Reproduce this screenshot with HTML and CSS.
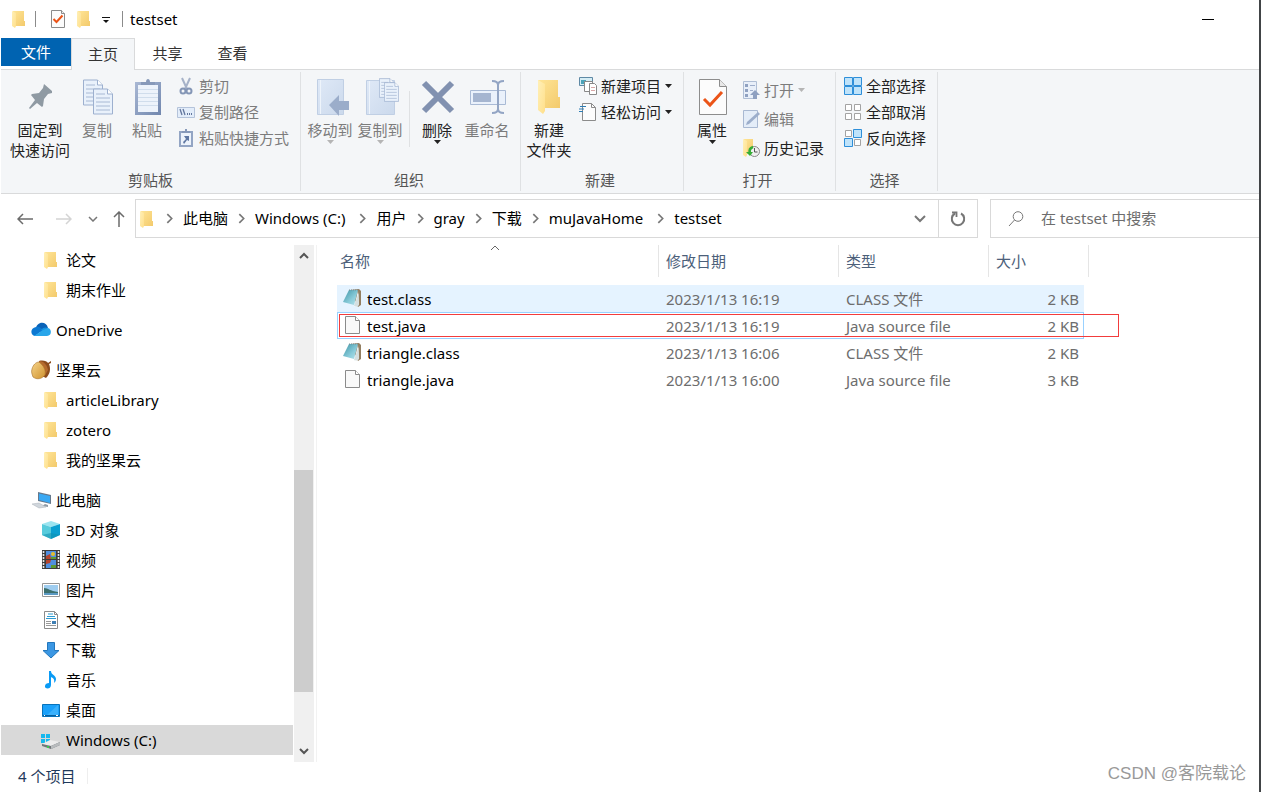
FILE: index.html
```html
<!DOCTYPE html>
<html lang="zh-CN">
<head>
<meta charset="utf-8">
<title>testset</title>
<link rel="stylesheet" href="styles.css">
</head>
<body>
<svg class="defs" aria-hidden="true">
  <defs>
    <linearGradient id="gf" x1="0" y1="0" x2="1" y2="1"><stop offset="0" stop-color="#ffe596"/><stop offset="1" stop-color="#f3ca6c"/></linearGradient>
    <linearGradient id="gp" x1="0" y1="0" x2="1" y2="1"><stop offset="0" stop-color="#fff0b8"/><stop offset="1" stop-color="#ffdf8a"/></linearGradient>
    <linearGradient id="gb" x1="0" y1="0" x2="1" y2="1"><stop offset="0" stop-color="#a9b8d4"/><stop offset="1" stop-color="#7187ae"/></linearGradient>
    <linearGradient id="gl" x1="0" y1="0" x2="1" y2="1"><stop offset="0" stop-color="#dfe9f7"/><stop offset="1" stop-color="#cbd9ec"/></linearGradient>
    <linearGradient id="gt" x1="0" y1="0" x2="1" y2="1"><stop offset="0" stop-color="#3d93a5"/><stop offset=".6" stop-color="#8accda"/><stop offset="1" stop-color="#b9e3ea"/></linearGradient>
    <linearGradient id="ga" x1="0" y1="0" x2="1" y2="1"><stop offset="0" stop-color="#f6d48a"/><stop offset="1" stop-color="#cf922f"/></linearGradient>
    <symbol id="folder" viewBox="0 0 20 20"><path d="M4 2h11v10h1v5H5z" fill="url(#gf)"/><path d="M3 2l4 2v13l-1 2-3-2z" fill="url(#gp)"/></symbol>
    <symbol id="chev" viewBox="0 0 10 10"><path d="M3 1l4 4-4 4" fill="none" stroke="#777" stroke-width="1.5"/></symbol>
    <symbol id="caret" viewBox="0 0 7 4"><path d="M0 0h7L3.500 4z" fill="currentColor"/></symbol>
    <symbol id="page" viewBox="0 0 20 20"><path d="M3.500.500h10l4 4v13h-14z" fill="#f9f9f9" stroke="#8b8b8b"/><path d="M13.500.500v4h4" fill="#fff" stroke="#8b8b8b"/></symbol>
    <symbol id="note" viewBox="0 0 20 20"><path d="M8 1l9-1 2 2v14l-3 2z" fill="#937f62"/><path d="M16 2l1 14-5 2z" fill="#f5fafb"/><path d="M16.500 4l.5 12-2 1.500-3-.5z" fill="#d5dfe0"/><path d="M7 1h9l-4 15-11-3z" fill="url(#gt)"/><path d="M7 1h9" stroke="#7b8d90" stroke-dasharray="1 1"/></symbol>
    <symbol id="propdoc" viewBox="0 0 28 36"><path d="M.5.500h20l7 7v28H.5z" fill="#fcfcfc" stroke="#8d8d8d"/><path d="M20.500.500v7h7" fill="#e8e8e8" stroke="#8d8d8d"/><path d="M5 20l6 6 12-13" fill="none" stroke="#eb5418" stroke-width="3"/></symbol>
    <symbol id="copydoc" viewBox="0 0 20 26"><path d="M.5.500h14l5 5v20H.5z" fill="#e9f1fb" stroke="#9db0cf"/><path d="M14.500.500v5h5" fill="#fff" stroke="#9db0cf"/><path d="M3 5.500h9M3 9.500h14M3 13.500h14M3 17.500h14M3 21.500h14" stroke="#a8b9d4"/></symbol>
  </defs>
</svg>
<div class="window">
  <header class="titlebar">
    <svg class="i20"><use href="#folder"/></svg>
    <span class="tsep"></span>
    <button class="qbtn" aria-label="属性"><svg width="16" height="18" viewBox="0 0 16 18"><path d="M1.500.500h10l3 3v14h-13z" fill="#fcfcfc" stroke="#8b8b8b"/><path d="M11.500.500v3h3" fill="#eee" stroke="#8b8b8b"/><path d="M3.500 9l3 3 6-6.500" fill="none" stroke="#eb5418" stroke-width="2"/></svg></button>
    <button class="qbtn" aria-label="新建文件夹"><svg class="i20"><use href="#folder"/></svg></button>
    <button class="qbtn drop" aria-label="自定义"><svg width="8" height="7" viewBox="0 0 8 7"><path d="M0 .500h8" stroke="#111"/><path d="M1 3h6L4 6z" fill="#111"/></svg></button>
    <span class="tsep"></span>
    <h1 class="title">testset</h1>
    <button class="minimize" aria-label="最小化"></button>
  </header>
  <nav class="tabs">
    <button class="tab file">文件</button><button class="tab active">主页</button><button class="tab">共享</button><button class="tab">查看</button>
  </nav>
  <section class="ribbon">
    <div class="group clip">
      <div class="tools">
        <button class="big wide"><span class="pic"><svg width="28" height="28" viewBox="0 0 28 28"><path d="M17 1l8 7v2l-4 1-4 5-1 7-1 1-5-4-7 6-1-1 6-8-4-5 1-1 7-1 4-5z" fill="#8f9aa3"/></svg></span>固定到<br>快速访问</button>
        <button class="big off"><span class="pic"><svg width="32" height="38" viewBox="0 0 32 38"><use href="#copydoc" x="1" y="1" width="20" height="27"/><use href="#copydoc" x="11" y="10" width="20" height="27"/></svg></span>复制</button>
        <button class="big off"><span class="pic"><svg width="28" height="38" viewBox="0 0 28 38"><path d="M1 4h26v33H1z" fill="url(#gb)"/><path d="M4 7h20v27H4z" fill="#edf3fb"/><path d="M4 11.500h20M4 15.500h20M4 19.500h20M4 23.500h20M4 27.500h20" stroke="#d0ddec"/><path d="M7 7V4h5c0-4 4-4 4 0h5v3z" fill="#8799b9"/></svg></span>粘贴</button>
        <div class="list">
          <button class="small off"><svg viewBox="0 0 18 18"><path d="M5 1l5 11M13 1L8 12" stroke="#a6b2c8" stroke-width="2"/><circle cx="6" cy="14" r="2.500" fill="none" stroke="#8496b6" stroke-width="2"/><circle cx="12" cy="14" r="2.500" fill="none" stroke="#8496b6" stroke-width="2"/></svg>剪切</button>
          <button class="small off"><svg viewBox="0 0 18 18"><path d="M.5 4.500h17v10H.5z" fill="#e3edfa" stroke="#b4c3da"/><path d="M3 6l2 6M6 6l2 6" stroke="#64789e" stroke-width="1.300"/><path d="M10 11h1M12 11h1M14 11h1" stroke="#64789e" stroke-width="2"/></svg>复制路径</button>
          <button class="small off"><svg viewBox="0 0 18 18"><path d="M2 2h14v16H2z" fill="#93a5c4"/><path d="M4 4h10v12H4z" fill="#edf3fb"/><path d="M5 4V2h3V0h2v2h3v2z" fill="#8799b9"/><path d="M7 7h5v5l-2-1-3 4-1-2 3-3z" fill="#5f77a2"/></svg>粘贴快捷方式</button>
        </div>
      </div>
      <div class="label">剪贴板</div>
    </div>
    <div class="group organize">
      <div class="tools">
        <button class="big off"><span class="pic far"><svg width="34" height="38" viewBox="0 0 34 38"><path d="M2.500 1.500h26v35h-26z" fill="url(#gl)" stroke="#c0cfe4"/><path d="M5.500 2v34" stroke="#eef4fb"/><path d="M14 27l10-10v6h10v9H24v6z" fill="#9badca"/></svg></span>移动到<svg class="caret"><use href="#caret"/></svg></button>
        <button class="big off"><span class="pic far"><svg width="34" height="38" viewBox="0 0 34 38"><path d="M1.500 2.500h28v34h-28z" fill="url(#gl)" stroke="#c0cfe4"/><path d="M4.500 3v33" stroke="#eef4fb"/><use href="#copydoc" x="14" y="0" width="15" height="20"/><use href="#copydoc" x="19" y="4" width="15" height="20"/></svg></span>复制到<svg class="caret"><use href="#caret"/></svg></button>
        <span class="rsep"></span>
        <button class="big"><span class="pic"><svg width="34" height="34" viewBox="0 0 34 34"><path d="M3 3l28 28M31 3L3 31" stroke="#8191b0" stroke-width="6"/></svg></span>删除<svg class="caret"><use href="#caret"/></svg></button>
        <button class="big off"><span class="pic"><svg width="36" height="34" viewBox="0 0 36 34"><path d="M.5 10.500h35v14H.5z" fill="#eaf1fb" stroke="#a9bad5"/><path d="M3 13h18v9H3z" fill="#a5b5d0"/><path d="M22 1c4 0 6 1 6 4v24c0 3-2 4-6 4M34 1c-4 0-6 1-6 4v24c0 3 2 4 6 4" fill="none" stroke="#93a5c4" stroke-width="2"/></svg></span>重命名</button>
      </div>
      <div class="label">组织</div>
    </div>
    <div class="group new">
      <div class="tools">
        <button class="big"><span class="pic"><svg width="26" height="38" viewBox="0 0 26 38"><path d="M1 2h20v17h2v11H6z" fill="url(#gf)"/><path d="M1 2l7 4v27l-2 3-5-4z" fill="url(#gp)"/></svg></span>新建<br>文件夹</button>
        <div class="list">
          <button class="small"><svg viewBox="0 0 18 18"><path d="M.5.500h13v8H.5z" fill="#d5edf5" stroke="#5e89a5"/><path d="M2 3h5v4H2z" fill="#4ba3b9"/><path d="M5.500 4.500h8v10h-8z" fill="#fff" stroke="#888"/><path d="M10.500 6.500h5l2 2v9h-7z" fill="#fff" stroke="#888"/><path d="M12 10.500h4M12 13.500h4" stroke="#d7a7a7"/></svg>新建项目<svg class="caret"><use href="#caret"/></svg></button>
          <button class="small"><svg viewBox="0 0 18 18"><path d="M3.500.500h9l4 4v13h-13z" fill="#fcfcfc" stroke="#8b8b8b"/><path d="M12.500.500v4h4" fill="none" stroke="#8b8b8b"/><path d="M1 3.500h6M0 6h5M0 8.500h4" stroke="#2c7db5"/></svg>轻松访问<svg class="caret"><use href="#caret"/></svg></button>
        </div>
      </div>
      <div class="label">新建</div>
    </div>
    <div class="group open">
      <div class="tools">
        <button class="big"><span class="pic"><svg width="28" height="36"><use href="#propdoc"/></svg></span>属性<svg class="caret"><use href="#caret"/></svg></button>
        <div class="list loose">
          <button class="small off"><svg viewBox="0 0 18 18"><path d="M1.500.500h13v17h-13z" fill="#e8eff9" stroke="#afbed5"/><path d="M3 3h3v3H3zM3 8h3v3H3zM3 13h3v3H3z" fill="#8fa1c1"/><path d="M8 4.500h5M8 9.500h3" stroke="#9eaecb"/><path d="M13 9l5 5h-3v4h-4v-4H8z" fill="#8ea0c0"/></svg>打开<svg class="caret"><use href="#caret"/></svg></button>
          <button class="small off"><svg viewBox="0 0 18 18"><path d="M1.500.500h14v17h-14z" fill="#e4edf8" stroke="#a9b9d2"/><path d="M4 15l1-3L16 2l2 2L7 14z" fill="#9caecb"/></svg>编辑</button>
          <button class="small"><svg viewBox="0 0 18 18"><path d="M2 0h9v15H2z" fill="url(#gf)"/><path d="M1 0l4 2v14l-1 2-3-2z" fill="url(#gp)"/><circle cx="12.500" cy="12.500" r="5" fill="#f0f0f0" stroke="#888"/><path d="M12.500 9v4h3" fill="none" stroke="#555"/><path d="M11 8c-3 1-4 3-3 6" fill="none" stroke="#35ad35" stroke-width="2.500"/><path d="M4 13h7l-3 4z" fill="#35ad35"/></svg>历史记录</button>
        </div>
      </div>
      <div class="label">打开</div>
    </div>
    <div class="group select">
      <div class="tools">
        <div class="list">
          <button class="small"><svg viewBox="0 0 18 18"><path d="M.5.500h8v8h-8zM9.500.500h8v8h-8zM.5 9.500h8v8h-8zM9.500 9.500h8v8h-8z" fill="#bfe3fa" stroke="#2e8fd9"/></svg>全部选择</button>
          <button class="small"><svg viewBox="0 0 18 18"><path d="M1.500 1.500h6v6h-6zM10.500 1.500h6v6h-6zM1.500 10.500h6v6h-6zM10.500 10.500h6v6h-6z" fill="#fff" stroke="#a3a3a3"/></svg>全部取消</button>
          <button class="small"><svg viewBox="0 0 18 18"><path d="M1.500 1.500h6v6h-6zM10.500 10.500h6v6h-6z" fill="#fff" stroke="#a3a3a3"/><path d="M9.500.500h8v8h-8zM.5 9.500h8v8h-8z" fill="#bfe3fa" stroke="#2e8fd9"/></svg>反向选择</button>
        </div>
      </div>
      <div class="label">选择</div>
    </div>
  </section>
  <div class="addressbar">
    <div class="history">
      <button class="hbtn" aria-label="后退"><svg width="16" height="12" viewBox="0 0 16 12"><path d="M16 6H1M6 1L1 6l5 5" fill="none" stroke="#6b6b6b" stroke-width="1.500"/></svg></button>
      <button class="hbtn fwd" aria-label="前进"><svg width="16" height="12" viewBox="0 0 16 12"><path d="M0 6h15M10 1l5 5-5 5" fill="none" stroke="#d4d4d4" stroke-width="1.500"/></svg></button>
      <button class="hbtn" aria-label="最近"><svg width="10" height="6" viewBox="0 0 10 6"><path d="M1 1l4 4 4-4" fill="none" stroke="#777" stroke-width="1.500"/></svg></button>
      <button class="hbtn up" aria-label="上移"><svg width="12" height="16" viewBox="0 0 12 16"><path d="M6 16V1M1 6l5-5 5 5" fill="none" stroke="#6b6b6b" stroke-width="1.500"/></svg></button>
    </div>
    <div class="path">
      <svg class="i20"><use href="#folder"/></svg>
      <svg class="crumb-sep"><use href="#chev"/></svg><a href="#pc">此电脑</a>
      <svg class="crumb-sep"><use href="#chev"/></svg><a class="long" href="#c">Windows (C:)</a>
      <svg class="crumb-sep"><use href="#chev"/></svg><a href="#users">用户</a>
      <svg class="crumb-sep"><use href="#chev"/></svg><a href="#gray">gray</a>
      <svg class="crumb-sep"><use href="#chev"/></svg><a href="#downloads">下载</a>
      <svg class="crumb-sep"><use href="#chev"/></svg><a class="long" href="#mujava">muJavaHome</a>
      <svg class="crumb-sep"><use href="#chev"/></svg><a href="#testset">testset</a>
      <button class="expand" aria-label="展开"><svg width="12" height="8" viewBox="0 0 12 8"><path d="M1 1l5 5 5-5" fill="none" stroke="#777" stroke-width="2"/></svg></button>
      <button class="refresh" aria-label="刷新"><svg width="16" height="16" viewBox="0 0 16 16"><path d="M11 2.500a6.200 6.200 0 1 1-6 0" fill="none" stroke="#777" stroke-width="2"/><path d="M6.500 6V1.500H2" fill="none" stroke="#777" stroke-width="1.800"/></svg></button>
    </div>
    <label class="search"><svg width="16" height="16" viewBox="0 0 16 16"><circle cx="10" cy="5.500" r="4.800" fill="none" stroke="#777"/><path d="M6.500 9L1 15" stroke="#777"/></svg><input type="text" aria-label="搜索" placeholder="在 testset 中搜索"></label>
  </div>
  <main class="main">
    <nav class="tree">
      <a class="l1" href="#a"><svg><use href="#folder"/></svg>论文</a>
      <a class="l1" href="#b"><svg><use href="#folder"/></svg>期末作业</a>
      <a class="l0" href="#onedrive"><svg viewBox="0 0 20 20"><path d="M5 9c0-7 10-9 12-1l-5 4-7-1z" fill="#0a63b8"/><path d="M5 7c3-1 5 1 7 3l-8 6c-5-1-5-8 1-9z" fill="#0c78d2"/><path d="M10 10c2-3 5-3 7-2l-4 4z" fill="#1490df"/><path d="M3 16l9-6 5-2c4 1 4 8-1 8z" fill="#29a6ea"/></svg>OneDrive</a>
      <a class="l0" href="#nut"><svg viewBox="0 0 20 20"><path d="M8 1c4-1 8 0 9 2l3-2v2l-2 1c2 5 1 10-3 14l-6-3z" fill="#8d4c1c"/><path d="M8 1c5 0 8 4 9 9l-4 7z" fill="#b66a2c"/><path d="M1 9c1-4 4-7 7-7 5 4 7 8 6 13-3 4-8 5-12 2-1-3-2-5-1-8z" fill="url(#ga)" stroke="#a8702a" stroke-width=".6"/></svg>坚果云</a>
      <a class="l1" href="#d"><svg><use href="#folder"/></svg>articleLibrary</a>
      <a class="l1" href="#e"><svg><use href="#folder"/></svg>zotero</a>
      <a class="l1" href="#f"><svg><use href="#folder"/></svg>我的坚果云</a>
      <a class="l0" href="#pc"><svg viewBox="0 0 20 20"><path d="M7 2l13 3v9L7 11z" fill="#66788c"/><path d="M8 3.500l11 2.500v7L8 10z" fill="#3aa9f4"/><path d="M14 14l3 1v2l-6-1z" fill="#8f9aa5"/><path d="M1 14l7-1 7 4-7 1z" fill="#d0d6dc" stroke="#a9b1b9" stroke-width=".5"/></svg>此电脑</a>
      <a class="l1" href="#g"><svg viewBox="0 0 20 20"><path d="M10 1l9 3-9 3-9-3z" fill="#9be4f0"/><path d="M1 4l9 3v12l-9-4z" fill="#57cbdc"/><path d="M19 4l-9 3v12l9-4z" fill="#0a9fd0"/><path d="M10 13l9 2-9 4-9-4z" fill="#0e8fae" opacity=".55"/></svg>3D 对象</a>
      <a class="l1" href="#h"><svg viewBox="0 0 20 20"><path d="M1 0h18v19H1z" fill="#3c3c3c"/><path d="M2.500 1v17M17.500 1v17" stroke="#e6e6e6" stroke-width="1.600" stroke-dasharray="2 1"/><path d="M5 1h10v8H5zM5 10h10v8H5z" fill="#4f8fe0"/><path d="M5 6l4-2 1 5H5zM5 10h5l-1 3-4 1z" fill="#b5432c"/><circle cx="12" cy="4" r="2" fill="#e6c02b"/><path d="M10 7h5v2h-5zM10 15h5v3h-5z" fill="#5d9a33"/></svg>视频</a>
      <a class="l1" href="#i"><svg viewBox="0 0 20 20"><path d="M1.500 3.500h17v13h-17z" fill="#fff" stroke="#979797"/><path d="M3 5h14v10H3z" fill="#9fcdf0"/><path d="M3 8c4 0 6 3 14 4v3H3z" fill="#3c6f6d"/><path d="M3 13h14v2H3z" fill="#5b9ac4"/></svg>图片</a>
      <a class="l1" href="#j"><svg viewBox="0 0 20 20"><path d="M3.500 1.500h10l3 3v14h-13z" fill="#fff" stroke="#8b8b8b"/><path d="M13.500 1.500v3h3" fill="none" stroke="#8b8b8b"/><path d="M7 4h5M6 6.500h8M5 8.500h10" stroke="#2d9bd2" stroke-width="1.200"/><path d="M5 11.500h5M5 13.500h5M5 15.500h10" stroke="#999"/><path d="M11 11h4v3h-4z" fill="#3f7fb4"/></svg>文档</a>
      <a class="l1" href="#k"><svg viewBox="0 0 20 20"><path d="M6.500 2.500h7v8h4.500L10 18 2 10.500h4.500z" fill="#3b97e3" stroke="#2277bd"/></svg>下载</a>
      <a class="l1" href="#l"><svg viewBox="0 0 20 20"><path d="M8 1h2c0 4 5 4 5 8 0 2-1 3-2 4 1-4-1-5-3-6v8c0 5-7 4-6 1 0-2 2-3 4-3z" fill="#0a9bf5"/></svg>音乐</a>
      <a class="l1" href="#m"><svg viewBox="0 0 20 20"><path d="M1.500 4.500h17v12h-17z" fill="#1ba1fa" stroke="#0873bb"/><path d="M6 15L17 5v10z" fill="#3bb1fc"/><path d="M2 15.500h16" stroke="#075f9e"/><path d="M3 15.500h1M15 15.500h2" stroke="#fff"/></svg>桌面</a>
      <a class="l1 selected" href="#c"><svg viewBox="0 0 20 20"><path d="M0 4h4v4H0zM5 4h4v4H5zM0 9h4v4H0zM5 9h4v4H5z" fill="#16b8ee"/><path d="M9 10l10 2-9 4-9-2z" fill="#ececec"/><path d="M1 14l9 2 9-4v3l-9 4-9-3z" fill="#70767a"/><path d="M10 16l9-4v3l-9 4z" fill="#b8bbbd"/><path d="M6 17h2" stroke="#2ce043" stroke-width="1.500"/></svg>Windows (C:)</a>
    </nav>
    <div class="scroll">
      <button aria-label="向上滚动"><svg width="12" height="8" viewBox="0 0 12 8"><path d="M2 7l4-4 4 4" fill="none" stroke="#555" stroke-width="2"/></svg></button>
      <span></span><span class="thumb"></span><span></span>
      <button aria-label="向下滚动"><svg width="12" height="8" viewBox="0 0 12 8"><path d="M2 1l4 4 4-4" fill="none" stroke="#555" stroke-width="2"/></svg></button>
    </div>
    <section class="files">
      <table>
        <colgroup><col class="c-name"><col class="c-date"><col class="c-type"><col class="c-size"><col class="c-end"></colgroup>
        <thead><tr><th>名称<svg class="sort" width="10" height="6" viewBox="0 0 10 6"><path d="M1 5l4-4 4 4" fill="none" stroke="#666"/></svg></th><th>修改日期</th><th>类型</th><th colspan="2">大小</th></tr></thead>
        <tbody>
          <tr class="hover"><td><span class="fname"><svg><use href="#note"/></svg>test.class</span></td><td>2023/1/13 16:19</td><td>CLASS 文件</td><td>2 KB</td></tr>
          <tr class="focus"><td><span class="fname"><svg><use href="#page"/></svg>test.java</span><span class="mark"></span></td><td>2023/1/13 16:19</td><td>Java source file</td><td>2 KB</td></tr>
          <tr><td><span class="fname"><svg><use href="#note"/></svg>triangle.class</span></td><td>2023/1/13 16:06</td><td>CLASS 文件</td><td>2 KB</td></tr>
          <tr><td><span class="fname"><svg><use href="#page"/></svg>triangle.java</span></td><td>2023/1/13 16:00</td><td>Java source file</td><td>3 KB</td></tr>
        </tbody>
      </table>
    </section>
  </main>
  <footer class="status"><span>4 个项目</span></footer>
  <div class="watermark">CSDN @客院载论</div>
</div>
</body>
</html>
```
FILE: styles.css
```css
* { box-sizing: border-box; }
body { margin: 0; font: 15px/20px "Noto Sans", "Noto Sans CJK SC", sans-serif; color: #000; background: #fff; }
button, input { font: inherit; color: inherit; border: 0; background: none; padding: 0; margin: 0; }
a { color: inherit; text-decoration: none; }
svg { display: block; flex: none; }
.defs { position: absolute; width: 0; height: 0; }
.i20 { width: 20px; height: 20px; }

.window { position: relative; min-height: 100vh; display: flex; flex-direction: column; padding-left: 1px; border-right: 2px solid #414446; }

.titlebar { display: flex; align-items: center; height: 38px; padding-left: 8px; }
.tsep { width: 1px; height: 16px; background: #8b8b8b; margin-left: 6px; }
.qbtn { margin-left: 14px; }
.qbtn + .qbtn { margin-left: 8px; }
.qbtn.drop { margin: 3px 6px 0 8px; }
.qbtn.drop + .tsep { margin-left: 6px; }
.title { font-size: 15px; font-weight: 400; margin: 0 0 0 7px; }
.minimize { width: 12px; height: 1px; background: #000; margin: 0 45px 0 auto; }

.tabs { display: flex; height: 32px; margin-bottom: -1px; position: relative; }
.tab { width: 65px; height: 32px; color: #333; padding-bottom: 2px; }
.tab.file { width: 70px; height: 28px; background: #0063b1; color: #fff; padding: 0; }
.tab.active { width: 64px; background: #f4f6f8; border: 1px solid #d9dadb; border-bottom: 0; }

.ribbon { display: flex; height: 125px; background: #f4f6f8; border-top: 1px solid #d9dadb; border-bottom: 1px solid #d9dadb; padding: 2px 0; }
.group { display: flex; flex-direction: column; border-right: 1px solid #dfe1e3; }
.clip { width: 300px; padding-left: 7px; }
.organize { width: 220px; padding-left: 4px; }
.new { width: 163px; padding-left: 3px; }
.open { width: 152px; padding-left: 3px; }
.select { width: 102px; padding-left: 3px; }
.tools { display: flex; flex: 1; }
.label { color: #555; text-align: center; height: 21px; padding-right: 7px; }
.big { width: 50px; display: flex; flex-direction: column; align-items: center; padding-top: 4px; color: #222; white-space: nowrap; align-self: flex-start; }
.big.wide { width: 64px; display: block; text-align: center; }
.new .big { display: block; text-align: center; }
.pic { height: 44px; display: grid; place-items: center; padding: 0 0 2px 2px; }
.pic.far { padding-left: 4px; }
.off { color: #7c7c7c; }
.caret { width: 7px; height: 4px; }
.off .caret { color: #b5b5b5; }
.rsep { width: 1px; height: 56px; background: #dfe1e3; margin: 19px 2px 0 4px; }
.list { display: flex; flex-direction: column; margin-left: 5px; padding-top: 1px; }
.small { display: flex; align-items: center; gap: 4px; height: 26px; color: #222; white-space: nowrap; }
.small.off { color: #7c7c7c; }
.small svg { width: 18px; height: 18px; }
.small .caret { width: 7px; height: 4px; }
.loose { padding-top: 3px; }
.loose .small { height: 29px; }

.addressbar { display: flex; align-items: flex-start; height: 51px; padding-top: 5px; }
.history { display: flex; align-items: center; width: 134px; height: 39px; padding-left: 16px; }
.hbtn { width: 16px; display: grid; place-items: center; }
.hbtn.fwd { margin: 0 16px 0 23px; }
.hbtn:nth-child(3) { width: 10px; }
.hbtn.up { margin-left: 13px; }
.path { flex: 1; display: flex; align-items: center; height: 39px; border: 1px solid #d9d9d9; padding-left: 1px; white-space: nowrap; }
.path a { padding-bottom: 2px; }
.path .long { padding-right: 4px; }
.crumb-sep { width: 11px; height: 11px; margin: 0 8px; }
.path > .i20 + .crumb-sep { margin-left: 7px; }
.expand { width: 36px; margin-left: auto; display: grid; place-items: center; }
.refresh { width: 39px; height: 37px; border-left: 1px solid #d9d9d9; display: grid; place-items: center; }
.search { width: 269px; height: 39px; margin-left: 12px; border: 1px solid #d9d9d9; border-right: 0; display: flex; align-items: center; gap: 17px; padding-left: 17px; }
.search input { flex: 1; min-width: 0; outline: 0; padding-bottom: 2px; }
.search input::placeholder { color: #6d6d6d; opacity: 1; }

.main { flex: 1; display: flex; }
.tree { width: 293px; padding: 0 1px 7px 0; }
.tree a { display: flex; align-items: center; gap: 5px; height: 30px; }
.tree svg { width: 20px; height: 20px; }
.l0 { padding-left: 30px; margin-top: 10px; }
.l1 { padding-left: 40px; }
.selected { background: #d9d9d9; }
.scroll { width: 20px; display: grid; grid-template-rows: 20px 205fr 222fr 50fr 20px; background: #f0f0f0; }
.scroll button { display: grid; place-items: center; }
.thumb { background: #cdcdcd; margin-right: 1px; }
.files { flex: 1; margin-left: 2px; border-left: 1px solid #f2f2f2; padding-left: 20px; }
table { border-collapse: separate; border-spacing: 0; table-layout: fixed; width: 752px; }
.c-name { width: 322px; }
.c-date { width: 180px; }
.c-type { width: 150px; }
.c-size { width: 95px; }
.c-end { width: 5px; }
th { position: relative; height: 32px; padding: 0 0 0 7px; border-right: 1px solid #e5e5e5; text-align: left; font-weight: 400; color: #4c607a; }
th:first-child { padding-left: 3px; }
.sort { position: absolute; left: 153px; top: 0; }
thead::after { content: ""; display: block; height: 8px; }
td { position: relative; height: 27px; padding: 0 0 0 7px; color: #6d6d6d; white-space: nowrap; }
td:first-child { padding-left: 5px; color: #000; }
td:last-child { text-align: right; padding: 0 5px 0 0; }
.fname { display: flex; align-items: center; gap: 5px; }
.fname svg { width: 20px; height: 20px; }
.hover td { background: #e5f3ff; }
.focus td { border-top: 1px solid #99d1ff; border-bottom: 1px solid #99d1ff; }
.focus td:first-child { border-left: 1px solid #99d1ff; padding-left: 4px; }
.focus td:last-child { border-right: 1px solid #99d1ff; padding-right: 4px; }
.mark { position: absolute; left: 1px; top: 1px; width: 780px; height: 23px; border: 1px solid #f23c3c; z-index: 1; }

.status { height: 30px; display: flex; align-items: center; color: #1e395b; padding-bottom: 2px; }
.status span { padding: 0 12px 0 17px; border-right: 1px solid #eee; line-height: 16px; }
.watermark { position: absolute; right: 13px; bottom: 7px; font: 17px/22px "Liberation Sans", "Noto Sans CJK SC", sans-serif; color: #999; }
```
